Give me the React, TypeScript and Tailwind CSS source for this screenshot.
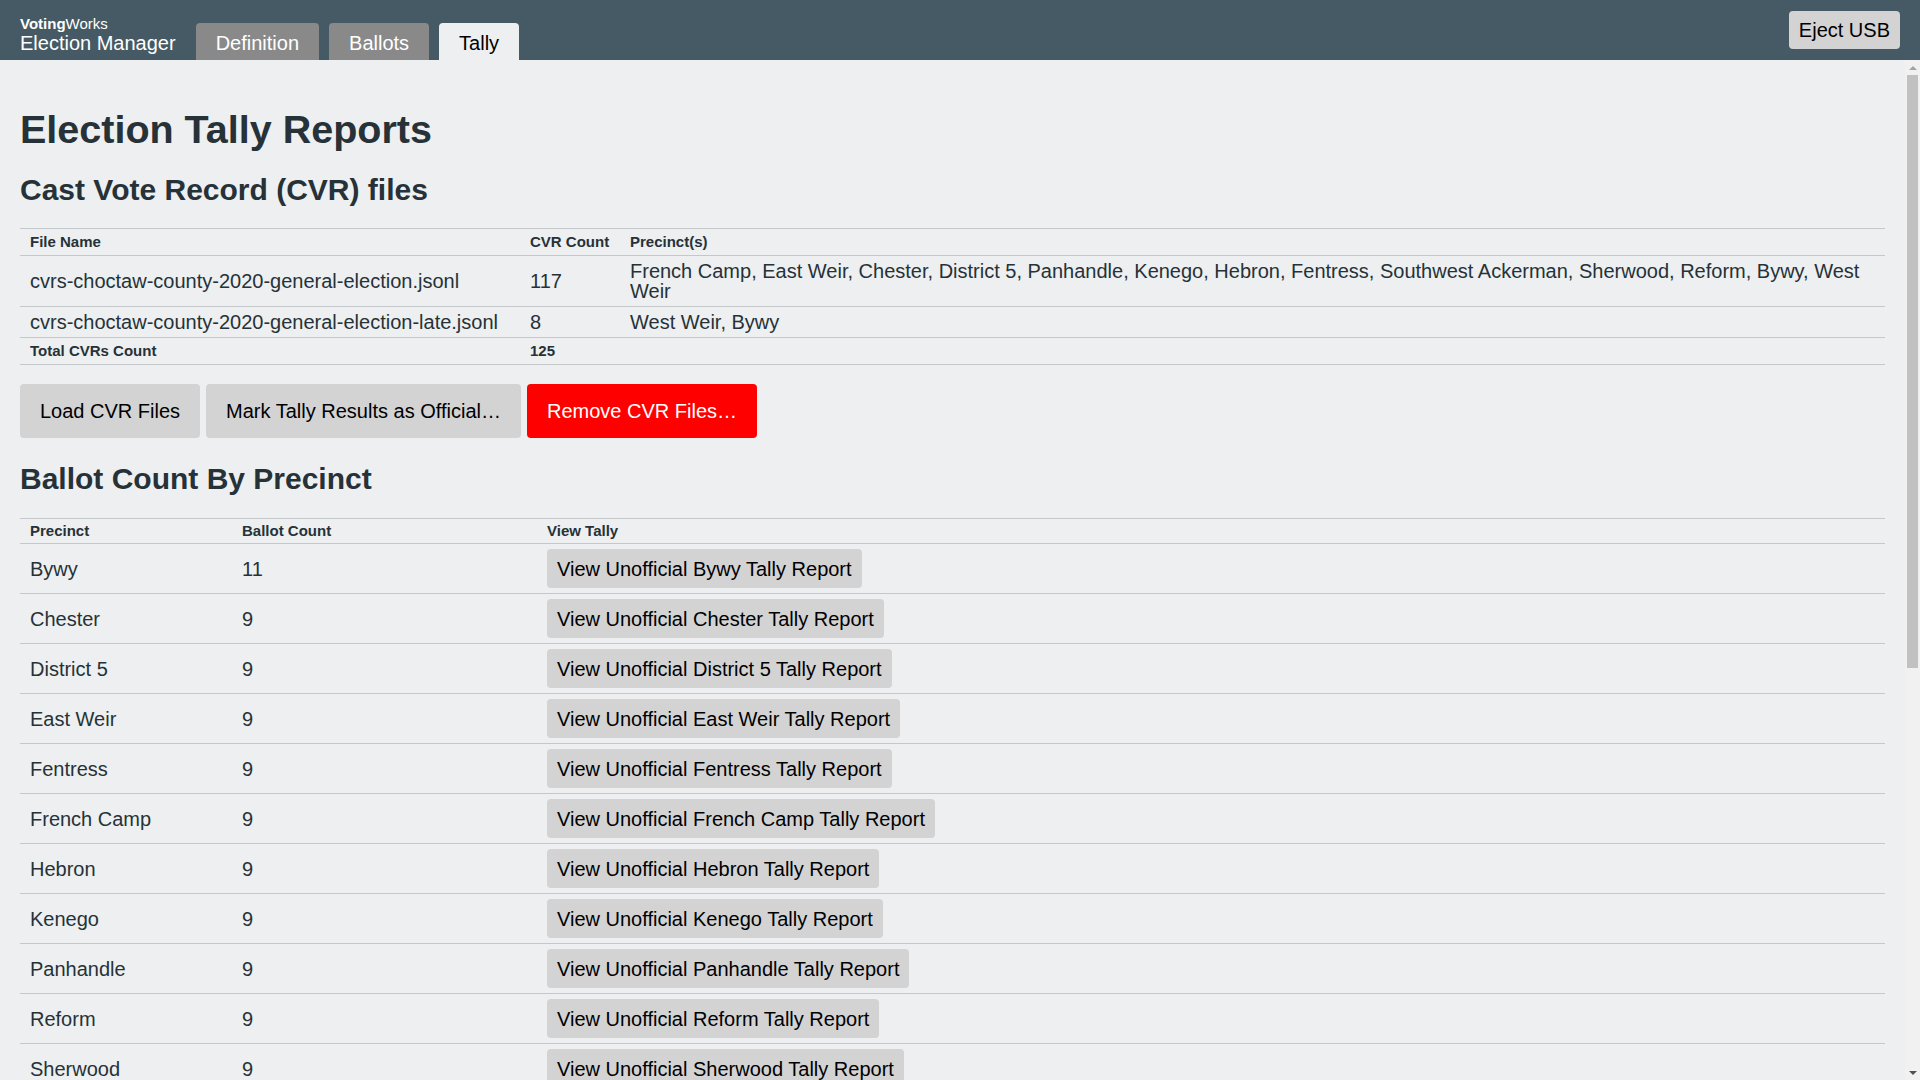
import React from "react";

const cvrFiles = [
  {
    name: "cvrs-choctaw-county-2020-general-election.jsonl",
    count: 117,
    precincts:
      "French Camp, East Weir, Chester, District 5, Panhandle, Kenego, Hebron, Fentress, Southwest Ackerman, Sherwood, Reform, Bywy, West Weir",
  },
  {
    name: "cvrs-choctaw-county-2020-general-election-late.jsonl",
    count: 8,
    precincts: "West Weir, Bywy",
  },
];

const precincts: [string, number][] = [
  ["Bywy", 11],
  ["Chester", 9],
  ["District 5", 9],
  ["East Weir", 9],
  ["Fentress", 9],
  ["French Camp", 9],
  ["Hebron", 9],
  ["Kenego", 9],
  ["Panhandle", 9],
  ["Reform", 9],
  ["Sherwood", 9],
  ["Southwest Ackerman", 9],
  ["West Weir", 15],
];

const votingMethods: [string, number][] = [
  ["Absentee", 38],
  ["Precinct", 87],
];

const cell = "border-b border-[#c5c8cb] px-[10px] text-left align-middle";
const small = `${cell} py-[5px] text-[15px] font-bold leading-4`;
const head = `${cell} py-[4px] text-[15px] font-bold leading-4`;
const body = `${cell} py-[5px] text-[20px] leading-5`;
const grayBtn = "rounded-[4px] bg-[#d3d3d3] text-[20px] leading-6 text-black";
const heading = "mb-[21px] mt-[23px] text-[30px] font-bold leading-9";

function CountTable({
  label,
  rows,
  total,
}: {
  label: string;
  rows: [string, number][];
  total: number;
}) {
  return (
    <table className="w-full table-fixed border-collapse border-t border-[#c5c8cb]">
      <thead>
        <tr>
          <th className={`${head} w-[212px]`}>{label}</th>
          <th className={`${head} w-[305px]`}>Ballot Count</th>
          <th className={head}>View Tally</th>
        </tr>
      </thead>
      <tbody>
        {rows.map(([name, count]) => (
          <tr key={name}>
            <td className={body}>{name}</td>
            <td className={body}>{count}</td>
            <td className={body}>
              <button className={`${grayBtn} px-[10px] py-[7.5px]`}>
                View Unofficial {name} Tally Report
              </button>
            </td>
          </tr>
        ))}
        <tr>
          <td className={small}>Total Ballot Count</td>
          <td className={small}>{total}</td>
          <td className={small} />
        </tr>
      </tbody>
    </table>
  );
}

// the page's scrollbar, as the browser drew it in the reference
function Scrollbar() {
  return (
    <div className="flex w-[15px] shrink-0 flex-col items-center bg-[#f1f1f1]">
      <div className="flex h-[15px] w-full items-center justify-center">
        <svg width="8" height="4" viewBox="0 0 8 4">
          <path d="M4 0L8 4H0Z" fill="#a3a3a3" />
        </svg>
      </div>
      <div className="h-[593px] w-[11px] bg-[#c1c1c1]" />
      <div className="flex-1" />
      <div className="flex h-[15px] w-full items-center justify-center">
        <svg width="8" height="4" viewBox="0 0 8 4">
          <path d="M0 0H8L4 4Z" fill="#505050" />
        </svg>
      </div>
    </div>
  );
}

export default function App() {
  return (
    <div className="flex h-screen flex-col bg-[#edeff0] font-['Liberation_Sans',Arial,Helvetica,sans-serif] text-[#263238]">
      <header className="flex h-[60px] shrink-0 items-end justify-between bg-[#455a64] px-5">
        <div className="flex items-end">
          <div className="pb-[5px] text-white">
            <div className="text-[15px] leading-[14px]">
              <span className="font-bold">Voting</span>Works
            </div>
            <div className="text-[20px] leading-6">Election Manager</div>
          </div>
          <nav className="ml-5 flex gap-[10px]">
            <span className="h-[37px] rounded-t-[4px] bg-[#898989] px-5 pt-2 text-[20px] leading-6 text-white">
              Definition
            </span>
            <span className="h-[37px] rounded-t-[4px] bg-[#898989] px-5 pt-2 text-[20px] leading-6 text-white">
              Ballots
            </span>
            <span className="h-[37px] rounded-t-[4px] bg-[#edeff0] px-5 pt-2 text-[20px] leading-6 text-black">
              Tally
            </span>
          </nav>
        </div>
        <button className={`${grayBtn} self-center px-[10px] py-[7px]`}>Eject USB</button>
      </header>

      <div className="flex min-h-0 flex-1">
        <main className="min-w-0 flex-1 overflow-y-auto px-5 pb-10 pt-[45px] [scrollbar-width:none]">
          <h1 className="text-[39.5px] font-bold leading-[48px]">Election Tally Reports</h1>
          <h2 className="mt-[19px] text-[30px] font-bold leading-9">Cast Vote Record (CVR) files</h2>

          <table className="mt-5 w-full table-fixed border-collapse border-t border-[#c5c8cb]">
            <thead>
              <tr>
                <th className={`${small} w-[500px]`}>File Name</th>
                <th className={`${small} w-[100px]`}>CVR Count</th>
                <th className={small}>Precinct(s)</th>
              </tr>
            </thead>
            <tbody>
              {cvrFiles.map((f) => (
                <tr key={f.name}>
                  <td className={`${body} whitespace-nowrap`}>{f.name}</td>
                  <td className={body}>{f.count}</td>
                  <td className={body}>{f.precincts}</td>
                </tr>
              ))}
              <tr>
                <td className={small}>Total CVRs Count</td>
                <td className={small}>125</td>
                <td className={small} />
              </tr>
            </tbody>
          </table>

          <div className="mt-[19px] flex gap-[6px]">
            <button className={`${grayBtn} px-5 py-[15px]`}>Load CVR Files</button>
            <button className={`${grayBtn} px-5 py-[15px]`}>Mark Tally Results as Official…</button>
            <button className="rounded-[4px] bg-[#ff0000] px-5 py-[15px] text-[20px] leading-6 text-white">
              Remove CVR Files…
            </button>
          </div>

          <h2 className={heading}>Ballot Count By Precinct</h2>
          <CountTable label="Precinct" rows={precincts} total={125} />

          <h2 className={heading}>Ballot Count By Voting Method</h2>
          <CountTable label="Voting Method" rows={votingMethods} total={125} />

          <h2 className={heading}>Other Reports</h2>
          <div className="flex gap-[6px]">
            <button className={`${grayBtn} px-5 py-[15px]`}>View Unofficial Full Election Tally Report</button>
            <button className={`${grayBtn} px-5 py-[15px]`}>Save Results File</button>
          </div>
        </main>
        <Scrollbar />
      </div>
    </div>
  );
}
